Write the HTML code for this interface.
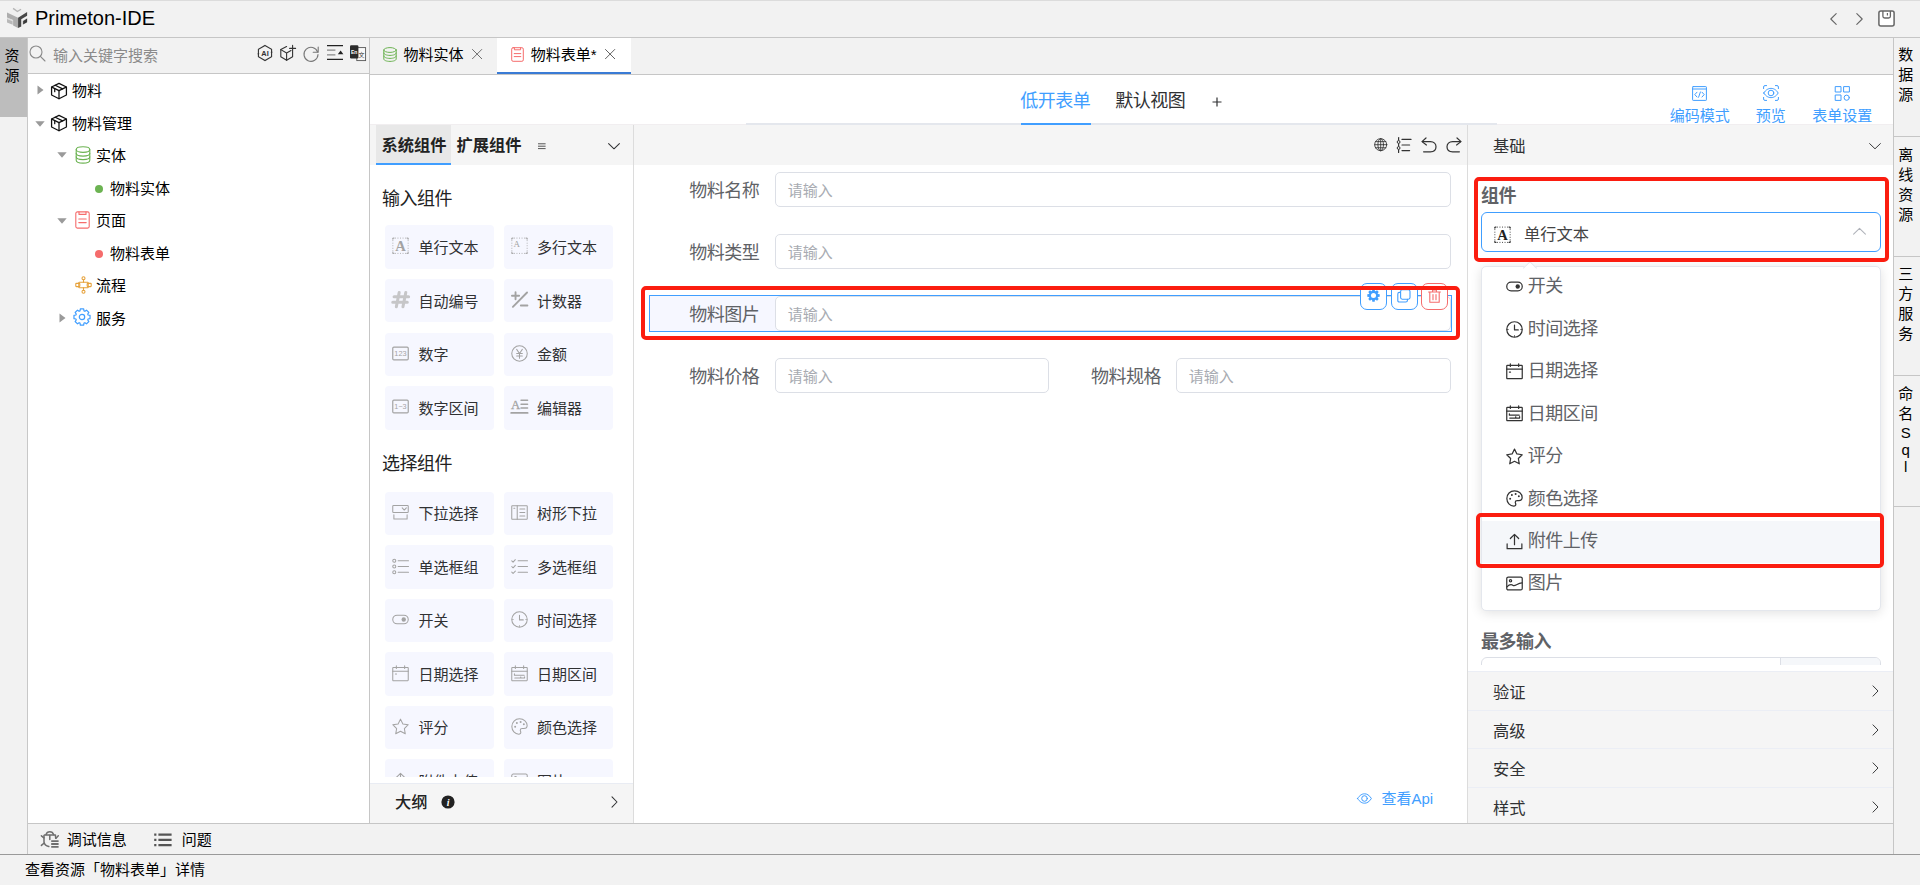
<!DOCTYPE html>
<html lang="zh-CN">
<head>
<meta charset="utf-8">
<title>Primeton-IDE</title>
<style>
*{box-sizing:border-box;margin:0;padding:0}
html,body{width:1920px;height:885px;overflow:hidden}
body{position:relative;background:#f2f2f2;font-family:"Liberation Sans","Noto Sans CJK SC",sans-serif;font-size:14px;color:#000}
.abs{position:absolute}
svg{display:block;overflow:visible}
span{white-space:nowrap}
#titlebar{left:0;top:0;width:1920px;height:38px;background:#f2f2f2;border-top:1px solid #dcdcdc;border-bottom:1px solid #c6c6c6}
#title{left:35px;top:5px;font-size:20px;line-height:26px;color:#000;white-space:nowrap}
#lstrip{left:0;top:38px;width:28px;height:816px;background:#f2f2f2;border-right:1px solid #c8c8c8}
#lstrip .tab{position:absolute;left:0;top:0;width:27px;height:79px;background:#bdbdbd;font-size:15px;line-height:20px;text-align:center;padding:8px 3px 0 0;color:#000}
#lpanel{left:28px;top:38px;width:342px;height:785px;background:#fff;border-right:1px solid #c6c6c6}
#search{left:0;top:0;width:341px;height:36px;background:#f2f2f2;border-bottom:1px solid #c6c6c6}
#search .ph{left:25px;top:8px;font-size:15px;line-height:20px;color:#8a8a8a;white-space:nowrap}
.tree .row{position:absolute;white-space:nowrap;font-size:15px;line-height:20px;color:#000}
#tabs{left:370px;top:38px;width:1523px;height:37px;background:#f2f2f2;border-bottom:1px solid #c6c6c6}
.tabtxt{position:absolute;font-size:15px;line-height:20px;white-space:nowrap;color:#000}
#tabActive{left:127px;top:0;width:134px;height:36px;background:#fff;border-bottom:2px solid #3a7bd5}
#toolbar{left:370px;top:75px;width:1523px;height:50px;background:#fff}
#toolbar .line{left:376px;top:48px;width:751px;height:2px;background:#e4e7ed}
#toolbar .line0{left:0;top:49px;width:1523px;height:1px;background:#f1eef0}
#toolbar .act{left:650.5px;top:48px;width:70px;height:2px;background:#409eff}
#toolbar .t1{font-size:18px;letter-spacing:-0.5px;line-height:24px}
#toolbar .t2{font-size:15px;line-height:20px;color:#409eff}
#cpanel{left:370px;top:125px;width:264px;height:698px;background:#fff;border-right:1px solid #dcdcdc;overflow:hidden}
#canvas{left:634px;top:125px;width:833px;height:698px;background:#fff}
#rpanel{left:1467px;top:125px;width:426px;height:698px;background:#fff;border-left:1px solid #dcdcdc}
.hdr{position:absolute;left:0;top:0;height:40px;background:#f5f5f5}
#rstrip{left:1893px;top:38px;width:27px;height:816px;background:#f2f2f2;border-left:1px solid #c6c6c6}
#rstrip .it{width:26px;padding:7.4px 2.6px 31px 0;border-bottom:1px solid #c6c6c6;font-size:15px;line-height:20px;text-align:center;color:#000}
#rstrip .it div{height:20px;line-height:20px}
#rstrip .it div.l{height:17.25px;line-height:17.25px}
#bbar{left:28px;top:823px;width:1865px;height:32px;background:#f2f2f2;border-top:1px solid #c6c6c6}
#bbar span{position:absolute;font-size:15px;line-height:20px;top:5.8px;color:#000}
#status{left:0;top:854px;width:1920px;height:31px;background:#f2f2f2;border-top:1px solid #9a9a9a}
#status span{position:absolute;left:25px;top:5px;font-size:15px;line-height:20px;color:#000}
.comp{position:absolute;width:109px;height:44px;background:#f6f7ff;border-radius:4px}
.comp span{position:absolute;left:34px;top:12px;font-size:15px;line-height:20px;color:#303133;white-space:nowrap}
.comp svg{position:absolute;left:7px;top:50%;margin-top:-9.4px}
.sect{position:absolute;left:12px;font-size:18px;letter-spacing:-0.5px;line-height:24px;color:#222;white-space:nowrap}
.ctab{position:absolute;font-size:16.25px;line-height:22px;font-weight:bold;color:#222;top:9px}
.flabel{position:absolute;font-size:18px;letter-spacing:-0.5px;line-height:24px;color:#606266;white-space:nowrap}
.finput{position:absolute;height:35px;border:1px solid #dcdfe6;border-radius:5px;background:#fff}
.finput span{position:absolute;left:11.7px;top:7.5px;font-size:15px;line-height:20px;color:#a8abb2}
.redbox{position:absolute;border:4px solid #fb1d10;border-radius:5px;z-index:20}
.abtn{position:absolute;width:27px;height:27px;border-radius:7px;background:#fff;border:1px solid #409eff;top:158px}
.opt{position:absolute;left:0;width:398px;height:42.4px}
.opt span{position:absolute;left:46.3px;top:7.3px;font-size:18px;letter-spacing:-0.5px;line-height:26px;color:#606266;white-space:nowrap}
.opt svg{position:absolute;left:24.5px;top:12px}
.coll{position:absolute;left:0;width:425px;height:39px;background:#f5f5f5;border-top:1px solid #ebeef5}
.coll span{position:absolute;left:25px;top:9px;font-size:16.25px;line-height:22px;color:#303133}
.coll svg{position:absolute;left:399.5px;top:12px}
.blabel{position:absolute;font-size:18px;letter-spacing:-0.5px;line-height:24px;font-weight:bold;color:#606266}
</style>
</head>
<body>
<div id="titlebar" class="abs"></div>
<div class="abs" style="left:0px;top:0px;"><svg width="30" height="30" viewBox="0 0 30 30"><polygon points="7.01,12.43 17.18,6.78 27.12,11.98 18.08,17.63" fill="#efefef"/><path d="M13.11 8.36 L17.40 11.53 L21.02 9.27" fill="none" stroke="#b5b5b5" stroke-width="1.3"/><polygon points="7.01,12.43 18.08,17.63 18.08,28.02 13.11,25.54 13.11,19.89 7.01,17.40" fill="#adadad"/><polygon points="7.01,18.08 12.66,20.43 12.66,24.86 7.01,22.60" fill="#b8b8b8"/><polygon points="7.01,18.08 12.66,20.43 12.66,21.24 7.01,18.89" fill="#e4e4e4"/><polygon points="18.08,17.63 27.12,11.98 27.12,15.82 21.24,19.21 21.24,26.44 18.08,28.02" fill="#484848"/><polygon points="21.92,20.88 27.12,17.99 27.12,22.24 21.92,25.08" fill="#dcdcdc"/><polygon points="23.14,20.88 27.12,18.62 27.12,22.24 23.14,24.50" fill="#3a3a3a"/></svg></div>
<div id="title" class="abs">Primeton-IDE</div>
<div class="abs" style="left:1830px;top:12.5px;"><svg width="7" height="12" viewBox="0 0 7 12"><g fill="none" stroke="#666" stroke-width="1.1" stroke-linecap="round" stroke-linejoin="round"><path d="M6.2 0.6 L0.8 6 L6.2 11.4"/></g></svg></div>
<div class="abs" style="left:1855.5px;top:12.5px;"><svg width="7" height="12" viewBox="0 0 7 12"><g fill="none" stroke="#666" stroke-width="1.1" stroke-linecap="round" stroke-linejoin="round"><path d="M0.8 0.6 L6.2 6 L0.8 11.4"/></g></svg></div>
<div class="abs" style="left:1878px;top:10px;"><svg width="17" height="17" viewBox="0 0 17 17"><rect x="0.9" y="0.9" width="15.2" height="15.2" rx="2" fill="#fff" stroke="#666" stroke-width="1.5"/><path d="M4.9 0.9 V6.2 Q4.9 8 6.7 8 H10.6 Q12.4 8 12.4 6.2 V0.9" fill="none" stroke="#666" stroke-width="1.3"/><path d="M9.4 3 V5.4" stroke="#666" stroke-width="1.2"/></svg></div>

<div id="lstrip" class="abs"><div class="tab">资<br>源</div></div>

<div id="lpanel" class="abs">
  <div id="search" class="abs"><span class="ph abs">输入关键字搜索</span>
<div class="abs" style="left:1.2px;top:7.3px;"><svg width="17" height="17" viewBox="0 0 17 17"><g fill="none" stroke="#8a8a8a" stroke-width="1.1" stroke-linecap="round" stroke-linejoin="round"><circle cx="7" cy="7" r="6"/><path d="M11.4 11.4 L16 16"/></g></svg></div>
<div class="abs" style="left:229px;top:7px;"><svg width="16" height="16" viewBox="0 0 16 16"><polygon points="8.00,0.40 14.58,4.20 14.58,11.80 8.00,15.60 1.42,11.80 1.42,4.20" fill="none" stroke="#333" stroke-width="1.1"/><path d="M0.4 8.6 L1.4 10.4 L2.4 8.6 Z M13.6 7.4 L14.6 5.6 L15.6 7.4 Z" fill="#333"/><text x="8" y="10.7" font-family="Liberation Sans,sans-serif" font-weight="bold" font-size="7.4" text-anchor="middle" fill="#333">AI</text></svg></div>
<div class="abs" style="left:252px;top:7px;"><svg width="16" height="16" viewBox="0 0 16 16"><g fill="none" stroke="#333" stroke-width="1.1" stroke-linecap="round" stroke-linejoin="round"><path d="M6.6 1.6 L0.8 4.6 V11.8 L6.6 15.2 L12.6 11.8 V7"/><path d="M0.8 4.6 L6.6 8 L11 5.6 M6.6 8 V15.2"/><path d="M9.6 3.4 H15.6 M12.6 0.4 V6.6"/></g></svg></div>
<div class="abs" style="left:275px;top:8px;"><svg width="16" height="16" viewBox="0 0 16 16"><g fill="none" stroke="#777" stroke-width="1.1" stroke-linecap="round" stroke-linejoin="round"><path d="M14.6 6 A7 7 0 1 0 15 8.6"/><path d="M15.2 1 V6.2 H10.2"/></g></svg></div>
<div class="abs" style="left:299px;top:7px;"><svg width="16" height="16" viewBox="0 0 16 16"><path d="M0 0.6 H16 M0 14.4 H16" stroke="#222" stroke-width="1.3"/><path d="M0 5.2 H8.4 M0 9.8 H8.4" stroke="#888" stroke-width="1.3"/><path d="M10.8 9.2 L13.6 5.6 L16.4 9.2 Z" fill="#222"/></svg></div>
<div class="abs" style="left:322px;top:7px;"><svg width="16" height="16" viewBox="0 0 16 16"><rect x="6.8" y="2.6" width="8.8" height="13" fill="#f8f8f8" stroke="#555" stroke-width="0.9"/><rect x="0" y="0.2" width="8.4" height="13.2" rx="1.2" fill="#2b2b2b"/><text x="4.1" y="8.6" font-family="Liberation Sans,sans-serif" font-weight="bold" font-size="5" text-anchor="middle" fill="#fff">En</text><text x="11.6" y="11.6" font-family="Noto Sans CJK SC,sans-serif" font-size="6" text-anchor="middle" fill="#333">文</text></svg></div>
  </div>
  <div class="tree" id="tree">
<div class="abs" style="left:9.1px;top:46.6px;"><svg width="7" height="10" viewBox="0 0 7 10"><path d="M0.5 0.5 L6.5 5 L0.5 9.5 Z" fill="#9a9a9a"/></svg></div>
<div class="abs" style="left:22.1px;top:43.9px;"><svg width="18" height="18" viewBox="0 0 16 16"><g fill="none" stroke="#111" stroke-width="1.12" stroke-linecap="round" stroke-linejoin="round"><path d="M8 1.2 L14.6 4.4 V11.6 L8 14.9 L1.4 11.6 V4.4 Z"/><path d="M1.6 4.5 L8 7.7 L14.4 4.5"/><path d="M8 7.7 V14.7"/><path d="M4.6 2.9 L11.2 6.1"/><path d="M4.2 6 V8.6"/></g></svg></div>
<span class="row" style="left:44px;top:42.5px">物料</span>
<div class="abs" style="left:6.6px;top:82.5px;"><svg width="10" height="6" viewBox="0 0 10 6"><path d="M0.3 0.3 L9.7 0.3 L5 5.8 Z" fill="#9a9a9a"/></svg></div>
<div class="abs" style="left:22.1px;top:76px;"><svg width="18" height="18" viewBox="0 0 16 16"><g fill="none" stroke="#111" stroke-width="1.12" stroke-linecap="round" stroke-linejoin="round"><path d="M8 1.2 L14.6 4.4 V11.6 L8 14.9 L1.4 11.6 V4.4 Z"/><path d="M1.6 4.5 L8 7.7 L14.4 4.5"/><path d="M8 7.7 V14.7"/><path d="M4.6 2.9 L11.2 6.1"/><path d="M4.2 6 V8.6"/></g></svg></div>
<span class="row" style="left:44px;top:76px">物料管理</span>
<div class="abs" style="left:28.6px;top:114.4px;"><svg width="10" height="6" viewBox="0 0 10 6"><path d="M0.3 0.3 L9.7 0.3 L5 5.8 Z" fill="#9a9a9a"/></svg></div>
<div class="abs" style="left:46.7px;top:107.7px;"><svg width="16" height="18" viewBox="0 0 16 18"><g fill="none" stroke="#6cb352" stroke-width="1.1" stroke-linecap="round" stroke-linejoin="round"><ellipse cx="8" cy="3.6" rx="6.8" ry="2.8"/><path d="M1.2 3.6 V14.2 C1.2 15.9 4.2 17.1 8 17.1 C11.8 17.1 14.8 15.9 14.8 14.2 V3.6"/><path d="M1.2 7.3 C1.2 9 4.2 10.1 8 10.1 C11.8 10.1 14.8 9 14.8 7.3"/><path d="M1.2 10.8 C1.2 12.5 4.2 13.6 8 13.6 C11.8 13.6 14.8 12.5 14.8 10.8"/></g></svg></div>
<span class="row" style="left:68px;top:107.5px">实体</span>
<div class="abs" style="left:66.8px;top:146.6px;width:8px;height:8px;border-radius:50%;background:#6cb352"></div>
<span class="row" style="left:82px;top:141px">物料实体</span>
<div class="abs" style="left:28.6px;top:179.6px;"><svg width="10" height="6" viewBox="0 0 10 6"><path d="M0.3 0.3 L9.7 0.3 L5 5.8 Z" fill="#9a9a9a"/></svg></div>
<div class="abs" style="left:47.2px;top:172.8px;"><svg width="15" height="18" viewBox="0 0 15 18"><g fill="none" stroke="#f56c6c" stroke-width="1.1" stroke-linecap="round" stroke-linejoin="round"><rect x="0.8" y="0.9" width="13.4" height="16.2" rx="1.6"/><path d="M4 1 V3.4 H11 V1"/><path d="M3.8 8 H11.2 M3.8 11.6 H11.2"/></g></svg></div>
<span class="row" style="left:68px;top:172.5px">页面</span>
<div class="abs" style="left:66.8px;top:211.8px;width:8px;height:8px;border-radius:50%;background:#f56c6c"></div>
<span class="row" style="left:82px;top:206px">物料表单</span>
<div class="abs" style="left:46.5px;top:237.8px;"><svg width="17" height="18" viewBox="0 0 17 18"><g fill="none" stroke="#e6a23c" stroke-width="1.1" stroke-linecap="round" stroke-linejoin="round"><circle cx="8.5" cy="2.2" r="1.5"/><circle cx="8.5" cy="15.8" r="1.5"/><path d="M8.5 3.7 V6.2 M8.5 11.8 V14.3"/><rect x="3.8" y="6.2" width="9.4" height="5.6" rx="0.6"/><rect x="0.8" y="7.4" width="4" height="3.2" rx="0.5"/><rect x="12.2" y="7.4" width="4" height="3.2" rx="0.5"/></g></svg></div>
<span class="row" style="left:68px;top:237.5px">流程</span>
<div class="abs" style="left:31.1px;top:274.5px;"><svg width="7" height="10" viewBox="0 0 7 10"><path d="M0.5 0.5 L6.5 5 L0.5 9.5 Z" fill="#9a9a9a"/></svg></div>
<div class="abs" style="left:45.4px;top:270.4px;"><svg width="18" height="18" viewBox="0 0 18 18"><g fill="none" stroke="#409eff" stroke-width="1.2" stroke-linecap="round" stroke-linejoin="round"><path d="M7.02 2.91 L7.34 0.97 L10.66 0.97 L10.98 2.91 L11.91 3.30 L13.50 2.15 L15.85 4.50 L14.70 6.09 L15.09 7.02 L17.03 7.34 L17.03 10.66 L15.09 10.98 L14.70 11.91 L15.85 13.50 L13.50 15.85 L11.91 14.70 L10.98 15.09 L10.66 17.03 L7.34 17.03 L7.02 15.09 L6.09 14.70 L4.50 15.85 L2.15 13.50 L3.30 11.91 L2.91 10.98 L0.97 10.66 L0.97 7.34 L2.91 7.02 L3.30 6.09 L2.15 4.50 L4.50 2.15 L6.09 3.30 Z"/><circle cx="9" cy="9" r="2.7"/></g></svg></div>
<span class="row" style="left:68px;top:271px">服务</span>
  </div>
</div>

<div id="tabs" class="abs">
  <div id="tabActive" class="abs"></div>
<div class="abs" style="left:13px;top:9px;"><svg width="14" height="15" viewBox="0 0 14 15"><g fill="none" stroke="#6cb352" stroke-width="1.0" stroke-linecap="round" stroke-linejoin="round"><ellipse cx="7" cy="3" rx="6.2" ry="2.4"/><path d="M0.8 3 V12 C0.8 13.4 3.6 14.4 7 14.4 C10.4 14.4 13.2 13.4 13.2 12 V3"/><path d="M0.8 6 C0.8 7.4 3.6 8.4 7 8.4 C10.4 8.4 13.2 7.4 13.2 6"/><path d="M0.8 9 C0.8 10.4 3.6 11.4 7 11.4 C10.4 11.4 13.2 10.4 13.2 9"/></g></svg></div>
<span class="tabtxt" style="left:33.5px;top:6.5px">物料实体</span>
<div class="abs" style="left:102.3px;top:11.1px;"><svg width="10.2" height="10.2" viewBox="0 0 11 11"><g fill="none" stroke="#666" stroke-width="1.0" stroke-linecap="round" stroke-linejoin="round"><path d="M0.5 0.5 L10.5 10.5 M10.5 0.5 L0.5 10.5"/></g></svg></div>
<div class="abs" style="left:141px;top:9px;"><svg width="13" height="15" viewBox="0 0 13 15"><g fill="none" stroke="#f56c6c" stroke-width="1.0" stroke-linecap="round" stroke-linejoin="round"><rect x="0.7" y="0.7" width="11.6" height="13.6" rx="1.4"/><path d="M3.4 0.8 V2.8 H9.6 V0.8"/><path d="M3.2 6.6 H9.8 M3.2 9.6 H9.8"/></g></svg></div>
<span class="tabtxt" style="left:160.7px;top:6.5px">物料表单*</span>
<div class="abs" style="left:235.3px;top:11.1px;"><svg width="10.2" height="10.2" viewBox="0 0 11 11"><g fill="none" stroke="#555" stroke-width="1.0" stroke-linecap="round" stroke-linejoin="round"><path d="M0.5 0.5 L10.5 10.5 M10.5 0.5 L0.5 10.5"/></g></svg></div>
</div>

<div id="toolbar" class="abs">
<div class="abs line0"></div><div class="abs line"></div><div class="abs act"></div>
<span class="abs t1" style="left:650.3px;top:13.5px;color:#409eff">低开表单</span>
<span class="abs t1" style="left:745.3px;top:13.5px;color:#303133">默认视图</span>
<div class="abs" style="left:842px;top:22px;"><svg width="10" height="10" viewBox="0 0 10 10"><path d="M0.5 5 H9.5 M5 0.5 V9.5" stroke="#303133" stroke-width="1.2"/></svg></div>
<div class="abs" style="left:1322px;top:11px;"><svg width="15" height="15" viewBox="0 0 15 15"><g fill="none" stroke="#409eff" stroke-width="1.0" stroke-linecap="round" stroke-linejoin="round"><rect x="0.6" y="0.6" width="13.8" height="13.8" rx="0.6"/><path d="M0.6 3 H14.4"/><path d="M5 6.2 L2.8 8.6 L5 11 M10 6.2 L12.2 8.6 L10 11 M8.4 6 L6.6 11.2"/></g></svg></div>
<span class="abs t2" style="left:1299.8px;top:30.5px">编码模式</span>
<div class="abs" style="left:1393px;top:10px;"><svg width="16" height="16" viewBox="0 0 16 16"><g fill="none" stroke="#409eff" stroke-width="1.0" stroke-linecap="round" stroke-linejoin="round"><path d="M0.6 3.6 V2 Q0.6 0.6 2 0.6 H3.6 M12.4 0.6 H14 Q15.4 0.6 15.4 2 V3.6 M15.4 12.4 V14 Q15.4 15.4 14 15.4 H12.4 M3.6 15.4 H2 Q0.6 15.4 0.6 14 V12.4"/><path d="M0.8 8 C3 4.4 5.6 3.4 8 3.4 C10.4 3.4 13 4.4 15.2 8 C13 11.6 10.4 12.6 8 12.6 C5.6 12.6 3 11.6 0.8 8 Z"/><circle cx="8" cy="8" r="2.8"/></g></svg></div>
<span class="abs t2" style="left:1385.8px;top:30.5px">预览</span>
<div class="abs" style="left:1465px;top:11px;"><svg width="15" height="15" viewBox="0 0 15 15"><g fill="none" stroke="#409eff" stroke-width="1.0" stroke-linecap="round" stroke-linejoin="round"><rect x="0.6" y="0.6" width="5.4" height="5.4"/><rect x="9" y="0.6" width="5.4" height="5.4"/><rect x="0.6" y="9" width="5.4" height="5.4"/><circle cx="11.7" cy="11.7" r="2.6"/></g></svg></div>
<span class="abs t2" style="left:1442.3px;top:30.5px">表单设置</span>
</div>
<div id="cpanel" class="abs">
<div class="hdr" style="width:263px"></div>
<div class="abs" style="left:6px;top:0;width:75px;height:38px;background:#e8e8e8"></div>
<div class="abs" style="left:6px;top:38px;width:75px;height:2px;background:#409eff"></div>
<span class="ctab" style="left:11.5px">系统组件</span>
<span class="ctab" style="left:86.5px">扩展组件</span>
<div class="abs" style="left:167.7px;top:18.3px;"><svg width="8" height="7" viewBox="0 0 8 7"><path d="M0 0.8 H7.6 M0 3.2 H7.6 M0 5.6 H7.6" stroke="#555" stroke-width="1"/></svg></div>
<div class="abs" style="left:237px;top:13.5px;"><svg width="14" height="14" viewBox="0 0 14 14"><g fill="none" stroke="#303133" stroke-width="1.045" stroke-linecap="round" stroke-linejoin="round" stroke-linecap="butt"><path d="M1.6 4.6 L7 9.8 L12.4 4.6"/></g></svg></div>
<span class="sect" style="top:61.7px">输入组件</span>
<div class="comp" style="left:15px;top:100.2px;height:43.7px"><svg width="17" height="17" viewBox="0 0.8 18 18"><rect x="0.9" y="0.9" width="16.2" height="16.2" fill="none" stroke="#a3a3a3" stroke-width="0.9" stroke-dasharray="1 1.7" stroke-dashoffset="0.5"/><path d="M0.9 2.6 V0.9 H2.6 M15.4 0.9 H17.1 V2.6 M17.1 15.4 V17.1 H15.4 M2.6 17.1 H0.9 V15.4" fill="none" stroke="#a3a3a3" stroke-width="1"/><text x="9" y="14.4" font-family="Liberation Serif,serif" font-size="15.5" font-weight="bold" text-anchor="middle" fill="#a3a3a3">A</text></svg><span style="left:33.6px;top:12.8px">单行文本</span></div>
<div class="comp" style="left:134px;top:100.2px;height:43.7px"><svg width="17" height="17" viewBox="0 0.8 18 18"><rect x="0.9" y="0.9" width="16.2" height="16.2" fill="none" stroke="#a3a3a3" stroke-width="0.9" stroke-dasharray="1 1.7" stroke-dashoffset="0.5"/><path d="M0.9 2.6 V0.9 H2.6 M15.4 0.9 H17.1 V2.6 M17.1 15.4 V17.1 H15.4 M2.6 17.1 H0.9 V15.4" fill="none" stroke="#a3a3a3" stroke-width="1"/><text x="6.2" y="10.4" font-family="Liberation Serif,serif" font-size="9.5" text-anchor="middle" fill="#a3a3a3">A</text></svg><span style="left:33px;top:12.8px">多行文本</span></div>
<div class="comp" style="left:15px;top:153.9px;height:43.6px"><svg width="17" height="17" viewBox="0 0 18 18"><g fill="none" stroke="#c6c6c8" stroke-width="3.2" stroke-linecap="round" stroke-linejoin="round" stroke-linecap="butt"><path d="M7.6 1.6 L4.6 16.6 M14.6 1.6 L11.6 16.6 M2.2 6.2 H17.6 M0.8 12 H16.2"/></g></svg><span style="left:33.6px;top:12.7px">自动编号</span></div>
<div class="comp" style="left:134px;top:153.9px;height:43.6px"><svg width="17" height="17" viewBox="0 0 18 18"><g fill="none" stroke="#a3a3a3" stroke-width="2.0" stroke-linecap="round" stroke-linejoin="round" stroke-linecap="butt"><path d="M1 5 H8.6 M4.8 1.2 V8.8 M2 16.8 L17 1.6 M10.4 15.4 H17.4"/></g></svg><span style="left:33px;top:12.7px">计数器</span></div>
<div class="comp" style="left:15px;top:208px;height:42.8px"><svg width="17" height="17" viewBox="0 0 18 18"><g fill="none" stroke="#a3a3a3" stroke-width="1.265" stroke-linecap="round" stroke-linejoin="round"><rect x="0.8" y="2.3" width="16.4" height="13.4" rx="1.2"/></g><text x="9" y="12.1" font-family="Liberation Sans,sans-serif" font-size="8.6" text-anchor="middle" fill="#a3a3a3" textLength="13" lengthAdjust="spacingAndGlyphs">123</text></svg><span style="left:33.6px;top:12.3px">数字</span></div>
<div class="comp" style="left:134px;top:208px;height:42.8px"><svg width="17" height="17" viewBox="0 0 18 18"><g fill="none" stroke="#a3a3a3" stroke-width="1.1" stroke-linecap="round" stroke-linejoin="round"><circle cx="9" cy="9" r="8.2"/><path d="M6 4.6 L9 9 L12 4.6 M9 9 V14 M6 9 H12 M6 11.6 H12"/></g></svg><span style="left:33px;top:12.3px">金额</span></div>
<div class="comp" style="left:15px;top:260.9px;height:43.8px"><svg width="17" height="17" viewBox="0 0 18 18"><g fill="none" stroke="#a3a3a3" stroke-width="1.265" stroke-linecap="round" stroke-linejoin="round"><rect x="0.8" y="2.3" width="16.4" height="13.4" rx="1.2"/></g><text x="9" y="12.1" font-family="Liberation Sans,sans-serif" font-size="8.6" text-anchor="middle" fill="#a3a3a3" textLength="13" lengthAdjust="spacingAndGlyphs">1~3</text></svg><span style="left:33.6px;top:12.8px">数字区间</span></div>
<div class="comp" style="left:134px;top:260.9px;height:43.8px"><svg width="17" height="17" viewBox="0 0 18 18"><text x="5" y="11.4" font-family="Liberation Serif,serif" font-size="13.5" text-anchor="middle" fill="#a3a3a3" stroke="#a3a3a3" stroke-width="0.3">A</text><g fill="none" stroke="#a3a3a3" stroke-width="1.5" stroke-linecap="round" stroke-linejoin="round" stroke-linecap="butt"><path d="M10.6 2.4 H17.6 M10.6 6.6 H17.6 M10.6 10.6 H17.6"/></g><g fill="none" stroke="#a3a3a3" stroke-width="1.9" stroke-linecap="round" stroke-linejoin="round" stroke-linecap="butt"><path d="M0.2 15.8 H17.6"/></g></svg><span style="left:33px;top:12.8px">编辑器</span></div>
<span class="sect" style="top:327px">选择组件</span>
<div class="comp" style="left:15px;top:367.4px;height:42.4px"><svg width="17" height="17" viewBox="0 0 18 18"><g fill="none" stroke="#a3a3a3" stroke-width="1.1" stroke-linecap="round" stroke-linejoin="round"><rect x="0.8" y="1.5" width="16.4" height="7.6" rx="0.8"/><path d="M10.8 4 L13 6.4 L15.2 4"/><path d="M2 11.5 V15.8 H16 V11.5"/></g></svg><span style="left:33.6px;top:12.1px">下拉选择</span></div>
<div class="comp" style="left:134px;top:367.4px;height:42.4px"><svg width="17" height="17" viewBox="0 0 18 18"><g fill="none" stroke="#a3a3a3" stroke-width="1.1" stroke-linecap="round" stroke-linejoin="round"><rect x="0.8" y="1.8" width="16.4" height="14.4" rx="0.6"/><path d="M6.6 1.8 V16.2"/><path d="M9.4 5.4 H14.6 M9.4 9 H14.6 M9.4 12.6 H14.6"/><path d="M3 4.6 H4"/></g></svg><span style="left:33px;top:12.1px">树形下拉</span></div>
<div class="comp" style="left:15px;top:420.3px;height:43.6px"><svg width="17" height="17" viewBox="0 0 18 18"><g fill="none" stroke="#a3a3a3" stroke-width="1.1" stroke-linecap="round" stroke-linejoin="round"><circle cx="2.4" cy="3" r="1.6"/><circle cx="2.4" cy="9" r="1.6"/><circle cx="2.4" cy="15" r="1.6"/><path d="M6.5 3 H17.5 M6.5 9 H17.5 M6.5 15 H17.5"/></g></svg><span style="left:33.6px;top:12.7px">单选框组</span></div>
<div class="comp" style="left:134px;top:420.3px;height:43.6px"><svg width="17" height="17" viewBox="0 0 18 18"><g fill="none" stroke="#a3a3a3" stroke-width="1.1" stroke-linecap="round" stroke-linejoin="round"><path d="M0.8 3 L2.2 4.4 L4.6 1.8 M0.8 9 L2.2 10.4 L4.6 7.8 M0.8 15 L2.2 16.4 L4.6 13.8"/><path d="M7.5 3 H17.5 M7.5 9 H17.5 M7.5 15 H17.5"/></g></svg><span style="left:33px;top:12.7px">多选框组</span></div>
<div class="comp" style="left:15px;top:474.2px;height:42.5px"><svg width="17" height="17" viewBox="0 0 18 18"><g fill="none" stroke="#a3a3a3" stroke-width="1.1" stroke-linecap="round" stroke-linejoin="round"><rect x="0.8" y="4.4" width="16.4" height="9.2" rx="4.6"/></g><circle cx="12.4" cy="9" r="2.3" fill="#a3a3a3"/></svg><span style="left:33.6px;top:12.2px">开关</span></div>
<div class="comp" style="left:134px;top:474.2px;height:42.5px"><svg width="17" height="17" viewBox="0 0 18 18"><g fill="none" stroke="#a3a3a3" stroke-width="1.1" stroke-linecap="round" stroke-linejoin="round"><circle cx="9" cy="9" r="8.2"/><path d="M9 4.4 V9.4 H13"/><path d="M9 15.4 V16.6 M1.4 9 H2.4 M15.6 9 H16.6" stroke-width="0.8"/></g></svg><span style="left:33px;top:12.2px">时间选择</span></div>
<div class="comp" style="left:15px;top:527.1px;height:43.6px"><svg width="17" height="17" viewBox="0 0 18 18"><g fill="none" stroke="#a3a3a3" stroke-width="1.1" stroke-linecap="round" stroke-linejoin="round"><rect x="0.8" y="2.6" width="16.4" height="14" rx="0.6"/><path d="M0.8 6.6 H17.2 M4.6 0.8 V3.6 M13.4 0.8 V3.6"/><path d="M3.6 9.6 H4.8"/></g></svg><span style="left:33.6px;top:12.7px">日期选择</span></div>
<div class="comp" style="left:134px;top:527.1px;height:43.6px"><svg width="17" height="17" viewBox="0 0 18 18"><g fill="none" stroke="#a3a3a3" stroke-width="1.1" stroke-linecap="round" stroke-linejoin="round"><rect x="0.8" y="2.6" width="16.4" height="14" rx="0.6"/><path d="M0.8 6.6 H17.2 M4.6 0.8 V3.6 M13.4 0.8 V3.6"/><path d="M3.6 9.4 V10.8 H14 M14.4 12.4 V13.8 H4 M10.2 12.6 H10.4"/></g></svg><span style="left:33px;top:12.7px">日期区间</span></div>
<div class="comp" style="left:15px;top:581px;height:42.7px"><svg width="17" height="17" viewBox="0 0 18 18"><g fill="none" stroke="#a3a3a3" stroke-width="1.1" stroke-linecap="round" stroke-linejoin="round"><path d="M9.00 1.20 L11.53 6.32 L17.18 7.14 L13.09 11.13 L14.05 16.76 L9.00 14.10 L3.95 16.76 L4.91 11.13 L0.82 7.14 L6.47 6.32 Z"/></g></svg><span style="left:33.6px;top:12.3px">评分</span></div>
<div class="comp" style="left:134px;top:581px;height:42.7px"><svg width="17" height="17" viewBox="0 0 18 18"><g fill="none" stroke="#a3a3a3" stroke-width="1.1" stroke-linecap="round" stroke-linejoin="round"><path d="M9 0.9 C4.4 0.9 0.9 4.4 0.9 9 C0.9 13.4 4.2 17.1 8.2 17.1 C9.8 17.1 10.4 16.2 10.4 15.2 C10.4 14.2 9.8 13.8 9.8 12.9 C9.8 11.8 10.7 11.2 11.8 11.2 H13.6 C15.8 11.2 17.1 9.8 17.1 8 C17.1 4 13.6 0.9 9 0.9 Z"/></g><circle cx="4.4" cy="9.2" r="1.05" fill="#a3a3a3"/><circle cx="6.2" cy="5.4" r="1.05" fill="#a3a3a3"/><circle cx="10.2" cy="4.2" r="1.05" fill="#a3a3a3"/><circle cx="13.6" cy="6.6" r="1.05" fill="#a3a3a3"/></svg><span style="left:33px;top:12.3px">颜色选择</span></div>
<div class="comp" style="left:15px;top:634.2px;height:43.6px"><svg width="17" height="17" viewBox="0 0 18 18"><g fill="none" stroke="#a3a3a3" stroke-width="1.1" stroke-linecap="round" stroke-linejoin="round"><path d="M9 12.4 V1.6 M4.6 5.8 L9 1.4 L13.4 5.8"/><path d="M1.2 11.6 V16.6 H16.8 V11.6"/></g></svg><span style="left:33.6px;top:12.7px">附件上传</span></div>
<div class="comp" style="left:134px;top:634.2px;height:43.6px"><svg width="17" height="17" viewBox="0 0 18 18"><g fill="none" stroke="#a3a3a3" stroke-width="1.1" stroke-linecap="round" stroke-linejoin="round"><rect x="0.8" y="2.2" width="16.4" height="13.6" rx="1.6"/><circle cx="4.8" cy="6" r="1.2"/><path d="M1 12.6 C3.6 9.8 5.6 9.6 7.6 11 C9.6 12.4 12 8.6 17 8.4"/></g></svg><span style="left:33px;top:12.7px">图片</span></div>
<div class="abs" style="left:0;top:652px;width:263px;height:7px;background:#fff"></div>
<div class="abs" style="left:0;top:657.6px;width:263px;height:41px;background:#f5f5f5;border-top:1px solid #e9ecf3"></div>
<span class="abs" style="left:25px;top:666px;font-size:16.25px;line-height:22px;font-weight:500;color:#222">大纲</span>
<div class="abs" style="left:71px;top:669.7px;"><svg width="14" height="14" viewBox="0 0 14 14"><circle cx="7" cy="7" r="6.6" fill="#222"/><text x="7.2" y="10.6" font-family="Liberation Serif,serif" font-style="italic" font-weight="bold" font-size="10" text-anchor="middle" fill="#fff">i</text></svg></div>
<div class="abs" style="left:236.8px;top:669.8px;"><svg width="14" height="14" viewBox="0 0 14 14"><g fill="none" stroke="#303133" stroke-width="1.045" stroke-linecap="round" stroke-linejoin="round" stroke-linecap="butt"><path d="M5 1.9 L10 7 L5 12.1"/></g></svg></div>
</div>
<div id="canvas" class="abs">
<div class="hdr" style="width:833px"></div>
<div class="abs" style="left:739.7px;top:13.2px;"><svg width="13.4" height="13.4" viewBox="0 0 14 14"><g fill="none" stroke="#333" stroke-width="0.9" stroke-linecap="round" stroke-linejoin="round"><circle cx="7" cy="7" r="6.3"/><ellipse cx="7" cy="7" rx="2.9" ry="6.3"/><path d="M0.7 7 H13.3 M1.6 3.8 H12.4 M1.6 10.2 H12.4 M7 0.7 V13.3"/></g></svg></div>
<div class="abs" style="left:762.2px;top:11.9px;"><svg width="16" height="16" viewBox="0 0 16 16"><g fill="none" stroke="#333" stroke-width="1.2" stroke-linecap="round" stroke-linejoin="round"><path d="M2.6 0.6 V15.4"/><path d="M6 2.4 H15 M6 8 H13.6 M6 13.6 H13.6"/></g><circle cx="2.6" cy="5" r="1.4" fill="#f5f5f5" stroke="#333" stroke-width="1"/><circle cx="2.6" cy="11" r="1.4" fill="#f5f5f5" stroke="#333" stroke-width="1"/></svg></div>
<div class="abs" style="left:787px;top:11.8px;"><svg width="16" height="16" viewBox="0 0 16 16"><g fill="none" stroke="#333" stroke-width="1.2" stroke-linecap="round" stroke-linejoin="round"><path d="M5 1 L1 4.6 L5.4 8"/><path d="M1.4 4.6 H9.4 C13 4.6 15 7 15 9.8 C15 12.6 13 14.8 9.4 14.8 H2.6"/></g></svg></div>
<div class="abs" style="left:811.6px;top:11.8px;"><svg width="16" height="16" viewBox="0 0 16 16"><g fill="none" stroke="#333" stroke-width="1.2" stroke-linecap="round" stroke-linejoin="round"><path d="M11 1 L15 4.6 L10.6 8"/><path d="M14.6 4.6 H6.6 C3 4.6 1 7 1 9.8 C1 12.6 3 14.8 6.6 14.8 H13.4"/></g></svg></div>
<div class="abs" style="left:15px;top:170px;width:803px;height:37px;background:#f6f7ff;border:1px solid #409eff"></div>
<span class="flabel" style="left:55.3px;top:54px">物料名称</span>
<div class="finput" style="left:141px;top:47px;width:676px"><span>请输入</span></div>
<span class="flabel" style="left:55.3px;top:116px">物料类型</span>
<div class="finput" style="left:141px;top:109px;width:676px"><span>请输入</span></div>
<span class="flabel" style="left:55.3px;top:178px">物料图片</span>
<div class="finput" style="left:141px;top:171px;width:676px"><span>请输入</span></div>
<span class="flabel" style="left:55.3px;top:240px">物料价格</span>
<div class="finput" style="left:141px;top:233px;width:274px"><span>请输入</span></div>
<span class="flabel" style="left:457px;top:240px">物料规格</span>
<div class="finput" style="left:542px;top:233px;width:275px"><span>请输入</span></div>
<div class="abtn" style="left:726px"><div class="abs" style="left:6px;top:4.8px;"><svg width="13" height="13" viewBox="0 0 14 14"><path d="M5.45 2.24 L5.73 0.32 L8.27 0.32 L8.55 2.24 L9.27 2.54 L10.82 1.38 L12.62 3.18 L11.46 4.73 L11.76 5.45 L13.68 5.73 L13.68 8.27 L11.76 8.55 L11.46 9.27 L12.62 10.82 L10.82 12.62 L9.27 11.46 L8.55 11.76 L8.27 13.68 L5.73 13.68 L5.45 11.76 L4.73 11.46 L3.18 12.62 L1.38 10.82 L2.54 9.27 L2.24 8.55 L0.32 8.27 L0.32 5.73 L2.24 5.45 L2.54 4.73 L1.38 3.18 L3.18 1.38 L4.73 2.54 Z" fill="#409eff"/><circle cx="7" cy="7" r="2.7" fill="#fff"/></svg></div></div>
<div class="abtn" style="left:757px"><div class="abs" style="left:5.3px;top:4.8px;"><svg width="14" height="14" viewBox="0 0 14 14"><g fill="none" stroke="#409eff" stroke-width="1.1" stroke-linecap="round" stroke-linejoin="round"><rect x="3.6" y="0.8" width="9.4" height="9.4" rx="1.6"/><path d="M10.4 10.4 V11.4 Q10.4 13 8.8 13 H2.4 Q0.8 13 0.8 11.4 V5 Q0.8 3.4 2.4 3.4 H3.4"/></g></svg></div></div>
<div class="abtn" style="left:787px;border-color:#f56c6c"><div class="abs" style="left:6px;top:4.8px;"><svg width="13" height="14" viewBox="0 0 13 14"><g fill="none" stroke="#f56c6c" stroke-width="1.1" stroke-linecap="round" stroke-linejoin="round" stroke-linecap="butt" stroke-linejoin="miter" ><path d="M0.6 3 H12.4 M4.6 3 V1 H8.4 V3 M1.8 3 V13.2 H11.2 V3 M5 5.6 V10.8 M8 5.6 V10.8"/></g></svg></div></div>
<div class="redbox" style="left:7px;top:161px;width:819px;height:54px"></div>
<div class="abs" style="left:722.5px;top:666.5px;"><svg width="15" height="13" viewBox="0 0 15 13"><g fill="none" stroke="#409eff" stroke-width="1.0" stroke-linecap="round" stroke-linejoin="round"><path d="M0.6 6.5 C2.8 3 5.2 1.8 7.5 1.8 C9.8 1.8 12.2 3 14.4 6.5 C12.2 10 9.8 11.2 7.5 11.2 C5.2 11.2 2.8 10 0.6 6.5 Z"/><circle cx="7.5" cy="6.5" r="2.8"/></g></svg></div>
<span class="abs" style="left:747.5px;top:664.2px;font-size:15px;line-height:20px;color:#409eff">查看Api</span>
</div>
<div id="rpanel" class="abs">
<div class="hdr" style="width:425px"></div>
<span class="abs" style="left:25px;top:9.5px;font-size:16.25px;line-height:22px;color:#303133">基础</span>
<div class="abs" style="left:400px;top:13.5px;"><svg width="14" height="14" viewBox="0 0 14 14"><g fill="none" stroke="#303133" stroke-width="0.95" stroke-linecap="round" stroke-linejoin="round" stroke-linecap="butt"><path d="M1.6 4.6 L7 9.8 L12.4 4.6"/></g></svg></div>
<span class="blabel" style="left:13px;top:58.5px">组件</span>
<div class="abs" style="left:13px;top:87px;width:400px;height:40px;border:1px solid #409eff;border-radius:6px;background:#fff"></div>
<div class="abs" style="left:25.5px;top:101.5px;"><svg width="17" height="17" viewBox="0 0.8 18 18"><rect x="0.9" y="0.9" width="16.2" height="16.2" fill="none" stroke="#222" stroke-width="0.9" stroke-dasharray="1 1.7" stroke-dashoffset="0.5"/><path d="M0.9 2.6 V0.9 H2.6 M15.4 0.9 H17.1 V2.6 M17.1 15.4 V17.1 H15.4 M2.6 17.1 H0.9 V15.4" fill="none" stroke="#222" stroke-width="1"/><text x="9" y="14.4" font-family="Liberation Serif,serif" font-size="15.5" font-weight="bold" text-anchor="middle" fill="#222">A</text></svg></div>
<span class="abs" style="left:56px;top:98px;font-size:16.25px;line-height:22px;color:#444">单行文本</span>
<div class="abs" style="left:384px;top:99.3px;"><svg width="15" height="15" viewBox="0 0 14 14"><g fill="none" stroke="#b0b3ba" stroke-width="1.0" stroke-linecap="round" stroke-linejoin="round"><path d="M1.5 9.5 L7 4 L12.5 9.5"/></g></svg></div>
<div class="abs" style="left:12.5px;top:141px;width:400px;height:345px;border:1px solid #e4e7ed;border-radius:5px;background:#fff;box-shadow:0 2px 12px rgba(0,0,0,0.12);overflow:hidden;z-index:5"><div class="opt" style="top:-0.90px"><svg width="17" height="17" viewBox="0 0 18 18"><g fill="none" stroke="#333" stroke-width="1.3" stroke-linecap="round" stroke-linejoin="round"><rect x="0.8" y="4.4" width="16.4" height="9.2" rx="4.6"/></g><circle cx="12.4" cy="9" r="2.3" fill="#333"/></svg><span>开关</span></div><div class="opt" style="top:41.53px"><svg width="17" height="17" viewBox="0 0 18 18"><g fill="none" stroke="#333" stroke-width="1.3" stroke-linecap="round" stroke-linejoin="round"><circle cx="9" cy="9" r="8.2"/><path d="M9 4.4 V9.4 H13"/><path d="M9 15.4 V16.6 M1.4 9 H2.4 M15.6 9 H16.6" stroke-width="0.8"/></g></svg><span>时间选择</span></div><div class="opt" style="top:83.96px"><svg width="17" height="17" viewBox="0 0 18 18"><g fill="none" stroke="#333" stroke-width="1.3" stroke-linecap="round" stroke-linejoin="round"><rect x="0.8" y="2.6" width="16.4" height="14" rx="0.6"/><path d="M0.8 6.6 H17.2 M4.6 0.8 V3.6 M13.4 0.8 V3.6"/><path d="M3.6 9.6 H4.8"/></g></svg><span>日期选择</span></div><div class="opt" style="top:126.39px"><svg width="17" height="17" viewBox="0 0 18 18"><g fill="none" stroke="#333" stroke-width="1.3" stroke-linecap="round" stroke-linejoin="round"><rect x="0.8" y="2.6" width="16.4" height="14" rx="0.6"/><path d="M0.8 6.6 H17.2 M4.6 0.8 V3.6 M13.4 0.8 V3.6"/><path d="M3.6 9.4 V10.8 H14 M14.4 12.4 V13.8 H4 M10.2 12.6 H10.4"/></g></svg><span>日期区间</span></div><div class="opt" style="top:168.82px"><svg width="17" height="17" viewBox="0 0 18 18"><g fill="none" stroke="#333" stroke-width="1.3" stroke-linecap="round" stroke-linejoin="round"><path d="M9.00 1.20 L11.53 6.32 L17.18 7.14 L13.09 11.13 L14.05 16.76 L9.00 14.10 L3.95 16.76 L4.91 11.13 L0.82 7.14 L6.47 6.32 Z"/></g></svg><span>评分</span></div><div class="opt" style="top:211.25px"><svg width="17" height="17" viewBox="0 0 18 18"><g fill="none" stroke="#333" stroke-width="1.3" stroke-linecap="round" stroke-linejoin="round"><path d="M9 0.9 C4.4 0.9 0.9 4.4 0.9 9 C0.9 13.4 4.2 17.1 8.2 17.1 C9.8 17.1 10.4 16.2 10.4 15.2 C10.4 14.2 9.8 13.8 9.8 12.9 C9.8 11.8 10.7 11.2 11.8 11.2 H13.6 C15.8 11.2 17.1 9.8 17.1 8 C17.1 4 13.6 0.9 9 0.9 Z"/></g><circle cx="4.4" cy="9.2" r="1.05" fill="#333"/><circle cx="6.2" cy="5.4" r="1.05" fill="#333"/><circle cx="10.2" cy="4.2" r="1.05" fill="#333"/><circle cx="13.6" cy="6.6" r="1.05" fill="#333"/></svg><span>颜色选择</span></div><div class="opt" style="top:253.68px;background:#f5f7fa"><svg width="17" height="17" viewBox="0 0 18 18"><g fill="none" stroke="#333" stroke-width="1.3" stroke-linecap="round" stroke-linejoin="round"><path d="M9 12.4 V1.6 M4.6 5.8 L9 1.4 L13.4 5.8"/><path d="M1.2 11.6 V16.6 H16.8 V11.6"/></g></svg><span>附件上传</span></div><div class="opt" style="top:296.11px"><svg width="17" height="17" viewBox="0 0 18 18"><g fill="none" stroke="#333" stroke-width="1.3" stroke-linecap="round" stroke-linejoin="round"><rect x="0.8" y="2.2" width="16.4" height="13.6" rx="1.6"/><circle cx="4.8" cy="6" r="1.2"/><path d="M1 12.6 C3.6 9.8 5.6 9.6 7.6 11 C9.6 12.4 12 8.6 17 8.4"/></g></svg><span>图片</span></div></div>
<div class="abs" style="left:57px;top:137.5px;width:10px;height:10px;background:#fff;border-left:1px solid #e4e7ed;border-top:1px solid #e4e7ed;transform:rotate(45deg);z-index:6"></div>
<div class="redbox" style="left:6px;top:52px;width:415px;height:85px"></div>
<div class="redbox" style="left:8px;top:388px;width:408px;height:55px"></div>
<span class="blabel" style="left:13px;top:504.79999999999995px">最多输入</span>
<div class="abs" style="left:13px;top:532px;width:400px;height:20px;border:1px solid #dcdfe6;border-radius:6px;background:#fff;overflow:hidden"><div class="abs" style="left:298px;top:0;width:101px;height:20px;background:#f5f7fa;border-left:1px solid #dcdfe6"></div></div>
<div class="abs" style="left:0;top:540px;width:425px;height:8px;background:#fff"></div>
<div class="coll" style="top:546.0px;height:40px"><span>验证</span><svg width="14" height="14" viewBox="0 0 14 14"><g fill="none" stroke="#303133" stroke-width="0.95" stroke-linecap="round" stroke-linejoin="round" stroke-linecap="butt"><path d="M5 1.9 L10 7 L5 12.1"/></g></svg></div>
<div class="coll" style="top:584.7px;height:40px"><span>高级</span><svg width="14" height="14" viewBox="0 0 14 14"><g fill="none" stroke="#303133" stroke-width="0.95" stroke-linecap="round" stroke-linejoin="round" stroke-linecap="butt"><path d="M5 1.9 L10 7 L5 12.1"/></g></svg></div>
<div class="coll" style="top:623.4px;height:40px"><span>安全</span><svg width="14" height="14" viewBox="0 0 14 14"><g fill="none" stroke="#303133" stroke-width="0.95" stroke-linecap="round" stroke-linejoin="round" stroke-linecap="butt"><path d="M5 1.9 L10 7 L5 12.1"/></g></svg></div>
<div class="coll" style="top:662.1px;height:36px"><span>样式</span><svg width="14" height="14" viewBox="0 0 14 14"><g fill="none" stroke="#303133" stroke-width="0.95" stroke-linecap="round" stroke-linejoin="round" stroke-linecap="butt"><path d="M5 1.9 L10 7 L5 12.1"/></g></svg></div>
</div>

<div id="rstrip" class="abs">
  <div class="it"><div>数</div><div>据</div><div>源</div></div>
  <div class="it"><div>离</div><div>线</div><div>资</div><div>源</div></div>
  <div class="it"><div>三</div><div>方</div><div>服</div><div>务</div></div>
  <div class="it"><div>命</div><div>名</div><div class="l">S</div><div class="l">q</div><div class="l">l</div></div>
</div>

<div id="bbar" class="abs">
<div class="abs" style="left:8px;top:2px;"><svg width="30" height="26" viewBox="0 0 30 26"><g fill="none" stroke="#6e6e6e" stroke-width="1.5" stroke-linecap="round" stroke-linejoin="round"><path d="M10 8.6 C10.6 6.6 12 5.7 13.8 5.7 C15.6 5.7 17 6.6 17.6 8.6"/><path d="M8.5 8.9 H19.4 L19.7 12.2"/><path d="M8 9.4 V16.2 C8.4 18.6 10.4 20 12.8 20.6"/><path d="M5.4 9.8 L7.9 11.8 M5.4 19.4 L7.9 17.2 M22.3 9.8 L20 12.2"/><path d="M13.8 9.4 V13.4"/></g><path d="M15.2 15.1 H22.6 M15.2 18 H22.6 M15.2 20.9 H22.6" stroke="#6e6e6e" stroke-width="1.9"/></svg></div>
<span style="left:38.7px">调试信息</span>
<div class="abs" style="left:125.5px;top:8.5px;"><svg width="18" height="14" viewBox="0 0 18 14"><path d="M4.4 1.6 H17.6 M4.4 6.9 H17.6 M4.4 12.2 H17.6" stroke="#555" stroke-width="2.2"/><path d="M0.2 1.6 H2.4 M0.2 6.9 H2.4 M0.2 12.2 H2.4" stroke="#555" stroke-width="2.2"/></svg></div>
<span style="left:153.7px">问题</span>
</div>
<div id="status" class="abs"><span>查看资源「物料表单」详情</span></div>
</body>
</html>
